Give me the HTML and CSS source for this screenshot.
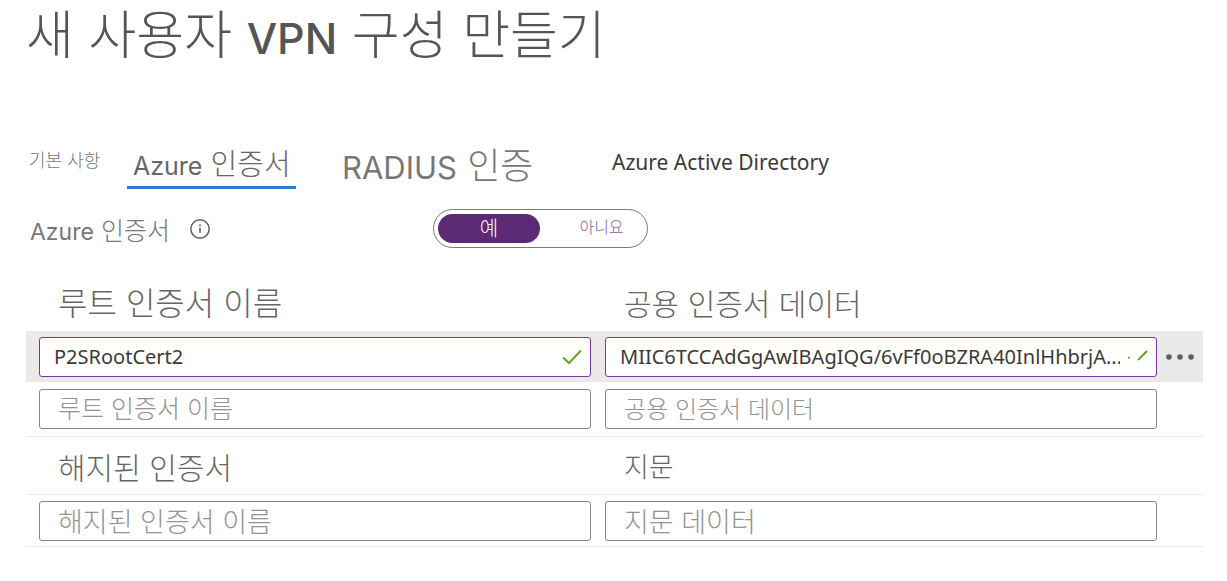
FILE: index.html
```html
<!DOCTYPE html>
<html lang="ko">
<head>
<meta charset="utf-8">
<title>새 사용자 VPN 구성 만들기</title>
<link rel="stylesheet" href="styles.css">
</head>
<body>
<main class="page">
  <h1 class="title">새 사용자 <span class="title-latin">VPN</span> 구성 만들기</h1>

  <div class="tabs" role="tablist">
    <button class="tab tab-basic" role="tab" type="button">기본 사항</button>
    <button class="tab tab-active" role="tab" type="button" aria-selected="true"><span class="tab-latin">Azure</span> 인증서</button>
    <button class="tab tab-radius" role="tab" type="button"><span class="radius-latin">RADIUS</span> 인증</button>
    <button class="tab tab-directory" role="tab" type="button">Azure Active Directory</button>
  </div>

  <div class="setting">
    <div class="setting-label" id="azure-label">
      <span><span class="label-latin">Azure</span> 인증서</span>
      <svg class="info" viewBox="0 0 20 20" aria-hidden="true"><circle cx="10" cy="10" r="9.2"/><path d="M10 8.6V14"/><circle class="dot" cx="10" cy="6.2" r=".9"/></svg>
    </div>
    <div class="toggle" role="group" aria-labelledby="azure-label">
      <button class="option option-on" type="button" aria-pressed="true">예</button>
      <button class="option" type="button" aria-pressed="false">아니요</button>
    </div>
  </div>

  <section class="certs">
    <div class="row head">
      <label class="wide" for="root-name">루트 인증서 이름</label>
      <label for="root-data">공용 인증서 데이터</label>
    </div>
    <div class="row selected">
      <div class="field valid">
        <input id="root-name" type="text" value="P2SRootCert2">
        <svg class="check" viewBox="0 0 20 16" aria-hidden="true"><path d="M1 8.5 7 14 19 1.500"/></svg>
      </div>
      <div class="field valid">
        <input id="root-data" type="text" value="MIIC6TCCAdGgAwIBAgIQG/6vFf0oBZRA40InlHhbrjA...">
        <svg class="check" viewBox="0 0 20 16" aria-hidden="true"><path d="M1 8v1.500M10 11 19 2"/></svg>
      </div>
      <button class="more" type="button" aria-label="추가 옵션"><svg viewBox="0 0 28 6" aria-hidden="true"><circle cx="3" cy="3" r="2.800"/><circle cx="14" cy="3" r="2.800"/><circle cx="25" cy="3" r="2.800"/></svg></button>
    </div>
    <div class="row entry">
      <div class="field"><input class="wide" type="text" aria-label="루트 인증서 이름" placeholder="루트 인증서 이름"></div>
      <div class="field"><input type="text" aria-label="공용 인증서 데이터" placeholder="공용 인증서 데이터"></div>
    </div>
  </section>

  <section class="certs">
    <div class="row head revoked">
      <label for="revoked-name">해지된 인증서</label>
      <label class="short" for="revoked-print">지문</label>
    </div>
    <div class="row entry large">
      <div class="field"><input id="revoked-name" type="text" placeholder="해지된 인증서 이름"></div>
      <div class="field"><input id="revoked-print" type="text" placeholder="지문 데이터"></div>
    </div>
  </section>
</main>
</body>
</html>
```
FILE: styles.css
```css
* { box-sizing: border-box; }

body {
  margin: 0;
  background: #fff;
  color: #605e5c;
  font-family: Inter, "Noto Sans CJK KR", sans-serif;
  font-weight: 300;
}

button, input { font: inherit; color: inherit; }
button { border: 0; background: none; padding: 0; }

.page { padding: 6px 24px 0 26px; }

.title {
  margin: 0;
  font-size: 52px;
  line-height: 60px;
  font-weight: 300;
  color: #555;
  white-space: nowrap;
}
.title-latin { font-size: 43px; font-weight: 500; }

.tabs {
  display: flex;
  align-items: flex-start;
  height: 45px;
  margin-top: 77px;
  white-space: nowrap;
}
.tab { line-height: 40px; color: #777; text-align: left; }
.tab-basic { width: 101px; padding-left: 3px; font-size: 18px; line-height: 32px; }
.tab-active {
  width: 169px;
  padding-left: 6px;
  border-bottom: 3px solid #2f7ad1;
  font-size: 29px;
  color: #666;
}
.tab-latin { font-size: 25px; font-weight: 400; }
.tab-radius { margin-left: 46px; width: 270px; font-size: 36px; line-height: 42px; }
.radius-latin { font-size: 31px; font-weight: 400; }
.tab-directory {
  font-family: "Noto Sans", sans-serif;
  font-size: 21px;
  line-height: 35px;
  font-weight: 400;
  color: #3b3a39;
}

.setting { display: flex; align-items: center; height: 77px; }
.setting-label {
  display: flex;
  align-items: center;
  gap: 20px;
  width: 407px;
  padding-left: 4px;
  font-size: 25px;
  color: #777;
}
.label-latin { font-size: 23px; font-weight: 400; }
.info { width: 20px; height: 20px; fill: none; stroke: #605e5c; stroke-width: 1.500; }
.info .dot { fill: #605e5c; stroke: none; }

.toggle {
  display: flex;
  width: 215px;
  height: 39px;
  padding: 4px;
  border: 1px solid #7a7a7a;
  border-radius: 20px;
}
.option { flex: 1; font-size: 16px; line-height: 24px; color: #8661a5; padding: 0 0 4px 20px; }
.option-on {
  flex: 0 0 102px;
  padding: 0;
  border-radius: 15px;
  background: #5c2a74;
  color: #fff;
  font-size: 20px;
}

.row {
  display: grid;
  grid-template-columns: 1fr 1fr 32px;
  column-gap: 14px;
  align-items: center;
  padding-left: 13px;
}
.head { height: 64px; padding-top: 10px; font-size: 30px; color: #666; }
.head label { padding-left: 19px; line-height: 46px; }
.head .wide { font-size: 32px; }
.head .short { font-size: 27px; }
.selected { height: 51px; background: #ebeae9; }
.entry { height: 55px; border-bottom: 1px solid #edebe9; }
.revoked { height: 58px; padding-top: 4px; border-bottom: 1px solid #e8e8e8; }
.large { height: 52px; }

.field { position: relative; }
.field input {
  display: block;
  width: 100%;
  height: 40px;
  padding: 0 18px;
  border: 1px solid #868686;
  border-radius: 3px;
  background: #fff;
  font-size: 24px;
  outline: 0;
}
.field .wide { font-size: 25px; }
.large input { padding-top: 3px; font-size: 27px; }
.field input::placeholder { color: #949494; opacity: 1; }
.valid input {
  padding: 0 36px 0 14px;
  border-color: #7d36a8;
  font-family: "Noto Sans", sans-serif;
  font-size: 20px;
  font-weight: 400;
  color: #3b3a39;
}
.check {
  position: absolute;
  right: 9px;
  top: 12px;
  width: 20px;
  height: 16px;
  fill: none;
  stroke: #6aa31c;
  stroke-width: 2;
}
.more { display: flex; justify-content: flex-start; }
.more svg { width: 28px; height: 6px; fill: #605e5c; margin-left: -5px; }
```
